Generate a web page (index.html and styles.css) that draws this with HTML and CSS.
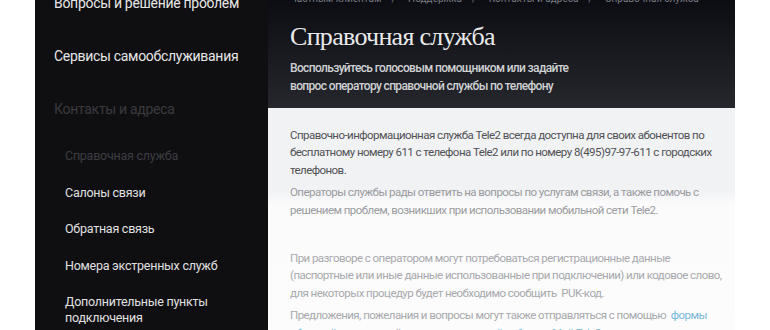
FILE: index.html
```html
<!DOCTYPE html>
<html lang="ru">
<head>
  <meta charset="UTF-8" />
  <meta name="viewport" content="width=device-width, initial-scale=1.0"/>
  <title>Справочная служба</title>
  <link rel="stylesheet" href="styles.css">
</head>
<body>
  <div class="page">
    <!-- Sidebar menu -->
    <nav class="sidebar">
      <a class="menu-item top" href="#">Вопросы и решение проблем</a>
      <a class="menu-item" href="#">Сервисы самообслуживания</a>
      <a class="menu-item dim" href="#">Контакты и адреса</a>
      <ul class="submenu">
        <li><a class="current" href="#">Справочная служба</a></li>
        <li><a href="#">Салоны связи</a></li>
        <li><a href="#">Обратная связь</a></li>
        <li><a href="#">Номера экстренных служб</a></li>
        <li><a href="#">Дополнительные пункты подключения</a></li>
      </ul>
    </nav>

    <main class="content">
      <header class="hero">
        <div class="crumbs">
          <a href="#">Частным клиентам</a><span>/</span>
          <a href="#">Поддержка</a><span>/</span>
          <a href="#">Контакты и адреса</a><span>/</span>
          <a href="#">Справочная служба</a>
        </div>
        <h1>Справочная служба</h1>
        <p class="lead">Воспользуйтесь голосовым помощником или задайте<br>вопрос оператору справочной службы по телефону</p>
      </header>

      <section class="text">
        <p class="dark">Справочно-информационная служба Tele2 всегда доступна для своих абонентов по бесплатному номеру 611 с телефона Tele2 или по номеру 8(495)97-97-611 с городских телефонов.</p>
        <p class="mid">Операторы службы рады ответить на вопросы по услугам связи, а также помочь с решением проблем, возникших при использовании мобильной сети Tele2.</p>
        <p class="light gap">При разговоре с оператором могут потребоваться регистрационные данные (паспортные или иные данные использованные при подключении) или кодовое слово, для некоторых процедур будет необходимо сообщить&nbsp; PUK-код.</p>
        <p class="light">Предложения, пожелания и вопросы могут также отправляться с помощью&nbsp; <a href="#">формы обратной связи</a> на сайте или через <a href="#">личный кабинет «Мой Tele2»</a>.</p>
      </section>
    </main>
  </div>
</body>
</html>
```

FILE: styles.css
```css
body {
  margin: 0;
  padding: 0;
  background: #fff;
  font-family: Roboto, sans-serif;
  overflow: hidden;
}

a {
  text-decoration: none;
  color: inherit;
}

.page {
  display: flex;
  margin-left: 35px;
  width: 700px;
  height: 330px;
}

/* Sidebar */
.sidebar {
  width: 233px;
  flex-shrink: 0;
  background: #0f0f12;
  padding: 0 0 0 19px;
  box-sizing: border-box;
  display: flow-root;
}

.menu-item {
  display: block;
  font-size: 14px;
  letter-spacing: -0.3px;
  color: #e6e6e6;
  height: 53px;
  line-height: 30px;
}

.menu-item.top {
  margin-top: -12px;
}

.menu-item.dim {
  color: #3a3a3e;
  height: 54px;
}

.submenu {
  list-style: none;
  margin: 0;
  padding: 0 0 0 11px;
}

.submenu li {
  font-size: 12.5px;
  letter-spacing: -0.25px;
  line-height: 16px;
  margin-bottom: 20.5px;
  color: #e0e0e0;
}

.submenu .current {
  color: #3d3d42;
}

.submenu li:last-child {
  width: 150px;
}

/* Content */
.content {
  width: 467px;
  flex-shrink: 0;
  background: linear-gradient(#f1f2f4 0, #f1f2f4 190px, #fbfbfc 205px, #fcfcfd 100%);
  overflow: hidden;
}

.hero {
  height: 108px;
  box-sizing: border-box;
  padding: 0 22px;
  background: linear-gradient(#0b0d13, #25272d);
  color: #e8e8e8;
  display: flow-root;
}

.crumbs {
  font-size: 10px;
  line-height: 10px;
  margin-top: -6px;
  color: #7a7c82;
  white-space: nowrap;
}

.crumbs span {
  margin: 0 10px;
}

.hero h1 {
  margin: 18px 0 0;
  font-family: "Liberation Serif", serif;
  font-weight: normal;
  font-size: 26px;
  letter-spacing: -0.7px;
  line-height: 30px;
  color: #e9e9ea;
}

.lead {
  margin: 7px 0 0;
  font-size: 12px;
  font-weight: 500;
  letter-spacing: -0.65px;
  line-height: 18px;
  color: #cfd0d2;
}

.text {
  padding: 19px 10px 0 22px;
}

.text p {
  margin: 0 0 5.5px;
  font-size: 11.5px;
  letter-spacing: -0.55px;
  line-height: 17.3px;
}

.text .dark {
  color: #505154;
}

.text .mid {
  color: #9a9b9e;
}

.text .light {
  color: #a8a9ac;
}

.text .gap {
  margin-top: 31px;
}

.text a {
  color: #7ab8d8;
}
```
